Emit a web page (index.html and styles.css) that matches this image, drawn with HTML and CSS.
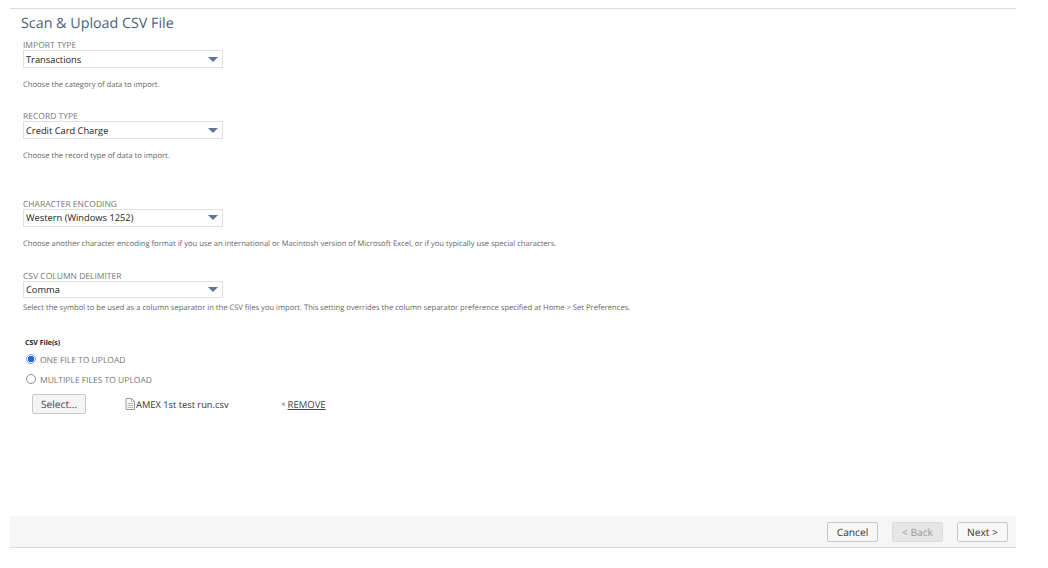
FILE: index.html
```html
<!DOCTYPE html>
<html>
	<head>
		<meta charset="utf-8">
		<title>Scan &amp; Upload CSV File</title>
		<link rel="stylesheet" href="styles.css">
	</head>
	<body>
		<div class="page">
			<h1 class="title">Scan &amp; Upload CSV File</h1>

			<div class="field field-import">
				<div class="label">IMPORT TYPE</div>
				<div class="select"><span>Transactions</span><i class="arrow"></i></div>
				<div class="help">Choose the category of data to import.</div>
			</div>

			<div class="field field-record">
				<div class="label">RECORD TYPE</div>
				<div class="select"><span>Credit Card Charge</span><i class="arrow"></i></div>
				<div class="help">Choose the record type of data to import.</div>
			</div>

			<div class="field field-encoding">
				<div class="label">CHARACTER ENCODING</div>
				<div class="select"><span>Western (Windows 1252)</span><i class="arrow"></i></div>
				<div class="help">Choose another character encoding format if you use an international or Macintosh version of Microsoft Excel, or if you typically use special characters.</div>
			</div>

			<div class="field field-delimiter">
				<div class="label">CSV COLUMN DELIMITER</div>
				<div class="select select-short"><span>Comma</span><i class="arrow"></i></div>
				<div class="help help-close">Select the symbol to be used as a column separator in the CSV files you import. This setting overrides the column separator preference specified at Home &gt; Set Preferences.</div>
			</div>

			<div class="files">
				<div class="files-title">CSV File(s)</div>
				<div class="radio-row"><i class="radio radio-on"></i>ONE FILE TO UPLOAD</div>
				<div class="radio-row"><i class="radio"></i>MULTIPLE FILES TO UPLOAD</div>
				<div class="file-row">
					<div class="btn btn-select">Select...</div>
					<svg class="file-icon" width="10" height="12" viewBox="0 0 10 12">
						<path d="M1 .5h5.500L9.500 3.500v8H1z" fill="#fff" stroke="#9a9a9a"/>
						<path d="M6.500 .5v3h3M2.500 5.500h5.500M2.500 7.500h5.500M2.500 9.500h5.500" fill="none" stroke="#b4b4b4"/>
					</svg>
					<span class="file-name">AMEX 1st test run.csv</span>
					<span class="remove-x">×</span>
					<span class="remove">REMOVE</span>
				</div>
			</div>

			<div class="footer">
				<div class="btn">Cancel</div>
				<div class="btn btn-off">&lt; Back</div>
				<div class="btn">Next &gt;</div>
			</div>
		</div>
	</body>
</html>
```

FILE: styles.css
```css
* {
	box-sizing: border-box;
	padding: 0;
	margin: 0;
}

body {
	width: 1048px;
	height: 568px;
	overflow: hidden;
	background-color: #fff;
	font-family: "Open Sans", "Liberation Sans", sans-serif;
	text-rendering: geometricPrecision;
	color: #333;
}

.page {
	width: 1006px;
	height: 540px;
	margin: 8px 0 0 10px;
	border-top: 1px solid #dcdcdc;
	display: flex;
	flex-direction: column;
}

.title {
	margin: 6px 0 0 11px;
	height: 18px;
	font-size: 14.300px;
	line-height: 18px;
	font-weight: 400;
	color: #4d5f79;
}

.field {
	margin-left: 13px;
}

.field-import {
	margin-top: 5px;
}

.field-record {
	margin-top: 19px;
}

.field-encoding {
	margin-top: 35.500px;
}

.field-delimiter {
	margin-top: 20.500px;
}

.label {
	height: 12px;
	font-size: 8.500px;
	line-height: 15px;
	color: #777;
}

.select {
	width: 200px;
	height: 18px;
	padding: 0 4px 0 2px;
	display: flex;
	justify-content: space-between;
	align-items: center;
	border: 1px solid #e0e0e0;
	font-size: 9.300px;
	color: #222;
}

.select-short {
	height: 17px;
}

.arrow {
	width: 0;
	height: 0;
	border-left: 5px solid transparent;
	border-right: 5px solid transparent;
	border-top: 5px solid #5c7499;
}

.help {
	margin-top: 12px;
	height: 10px;
	font-size: 7.600px;
	line-height: 10px;
	color: #666;
	white-space: nowrap;
}

.help-close {
	margin-top: 5px;
}

.files {
	margin: 26px 0 0 15px;
}

.files-title {
	height: 10px;
	margin-bottom: 1px;
	font-size: 7px;
	line-height: 10px;
	font-weight: 700;
	color: #222;
}

.radio-row {
	height: 20px;
	display: flex;
	align-items: center;
	font-size: 8.500px;
	color: #777;
}

.radio {
	width: 10px;
	height: 10px;
	margin: -2px 4px 0 1px;
	border: 1px solid #8c8c8c;
	border-radius: 50%;
	background-color: #fff;
}

.radio-on {
	border-color: #7da7ea;
	background: radial-gradient(circle, #1a66e0 0 3px, #fff 3.500px);
}

.file-row {
	height: 20px;
	margin: 4px 0 0 7px;
	display: flex;
	align-items: center;
	font-size: 9.300px;
}

.btn {
	height: 20px;
	padding: 0 9px;
	display: flex;
	align-items: center;
	justify-content: center;
	border: 1px solid #c8c8c8;
	border-radius: 2px;
	background-color: #f4f4f4;
	font-size: 10.200px;
	color: #333;
}

.btn-select {
	width: 54px;
	height: 20px;
	margin-right: 39px;
	color: #444;
}

.file-icon {
	margin-right: 1px;
}

.file-name {
	width: 145px;
	padding-top: 1px;
	color: #333;
}

.remove-x {
	margin-right: 2px;
	padding-top: 1px;
	font-size: 8px;
	color: #666;
}

.remove {
	padding-top: 1px;
	font-size: 9.500px;
	color: #444;
	text-decoration: underline;
}

.footer {
	margin-top: auto;
	height: 32px;
	padding: 6px 8px 0 0;
	display: flex;
	justify-content: flex-end;
	gap: 14px;
	background-color: #f6f6f6;
	border-bottom: 1px solid #dcdcdc;
}

.footer .btn {
	width: 51px;
	background-color: #f7f7f7;
}

.footer .btn-off {
	background-color: #e6e6e6;
	border-color: #dcdcdc;
	color: #999;
}
```
